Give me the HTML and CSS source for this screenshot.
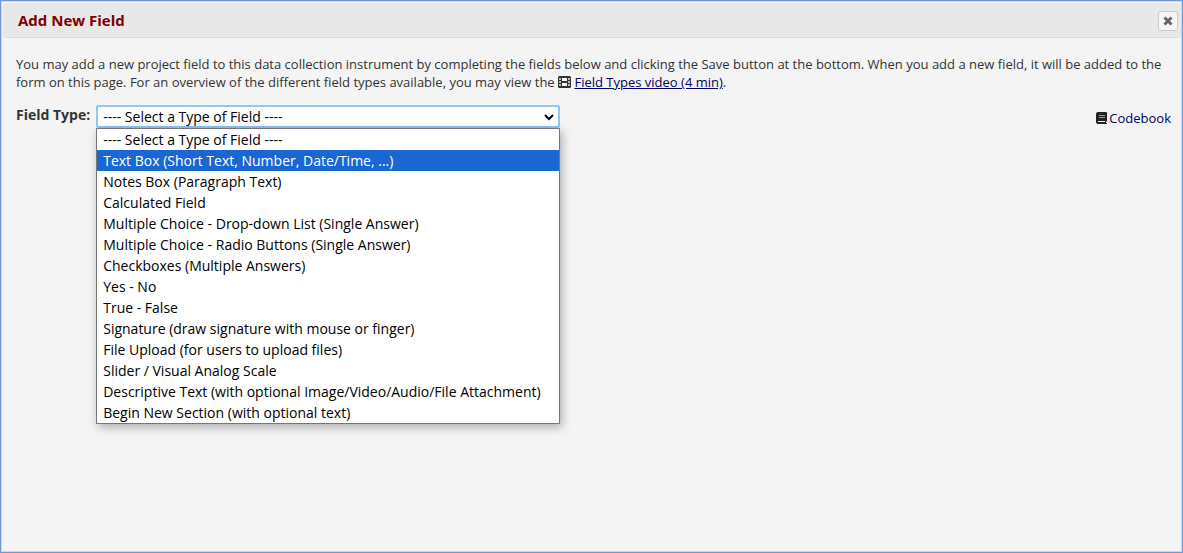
FILE: index.html
```html
<!DOCTYPE html>
<html lang="en">
<head>
<meta charset="utf-8">
<title>Add New Field</title>
<link rel="stylesheet" href="styles.css">
</head>
<body>
<section class="dialog" role="dialog" aria-labelledby="dialog-title">
  <header class="titlebar">
    <h1 class="title" id="dialog-title">Add New Field</h1>
    <button class="close" type="button" aria-label="Close">
      <svg width="10" height="10" viewBox="0 0 10 10" aria-hidden="true"><path d="M1.5 1.5l7 7M8.5 1.5l-7 7" stroke="#666" stroke-width="3"/></svg>
    </button>
  </header>
  <div class="content">
    <p class="intro">You may add a new project field to this data collection instrument by completing the fields below and clicking the Save button at the bottom. When you add a new field, it will be added to the form on this page. For an overview of the different field types available, you may view the <svg class="film" width="13" height="12" viewBox="0 0 13 12" aria-hidden="true"><rect width="13" height="12" rx="1.5" fill="#333"/><path d="M4 2h5v3H4zM4 7h5v3H4z" fill="#f4f4f4"/><path d="M1 2h2v2H1zM1 5h2v2H1zM1 8h2v2H1zM10 2h2v2h-2zM10 5h2v2h-2zM10 8h2v2h-2z" fill="#bbb"/></svg> <a class="video" href="#video">Field Types video (4 min)</a>.</p>
    <form class="row">
      <label class="label" for="field-type">Field Type:</label>
      <div class="picker">
        <select class="select" id="field-type">
          <option>---- Select a Type of Field ----</option>
        </select>
        <svg class="chevron" width="10" height="7" viewBox="0 0 10 7" aria-hidden="true"><path d="M1 1l4 4 4-4" fill="none" stroke="#000" stroke-width="2"/></svg>
        <ul class="menu" role="listbox" aria-label="Field types">
          <li class="option" role="option">---- Select a Type of Field ----</li>
          <li class="option active" role="option" aria-selected="true">Text Box (Short Text, Number, Date/Time, ...)</li>
          <li class="option" role="option">Notes Box (Paragraph Text)</li>
          <li class="option" role="option">Calculated Field</li>
          <li class="option" role="option">Multiple Choice - Drop-down List (Single Answer)</li>
          <li class="option" role="option">Multiple Choice - Radio Buttons (Single Answer)</li>
          <li class="option" role="option">Checkboxes (Multiple Answers)</li>
          <li class="option" role="option">Yes - No</li>
          <li class="option" role="option">True - False</li>
          <li class="option" role="option">Signature (draw signature with mouse or finger)</li>
          <li class="option" role="option">File Upload (for users to upload files)</li>
          <li class="option" role="option">Slider / Visual Analog Scale</li>
          <li class="option" role="option">Descriptive Text (with optional Image/Video/Audio/File Attachment)</li>
          <li class="option" role="option">Begin New Section (with optional text)</li>
        </ul>
      </div>
      <a class="codebook" href="#codebook"><svg width="11" height="12" viewBox="0 0 11 12" aria-hidden="true"><path d="M2 0h8a1 1 0 0 1 1 1v8l-1 1v1h1v1H2a2 2 0 0 1-2-2V2a2 2 0 0 1 2-2z" fill="#222"/><path d="M3 3.5h6M3 5.5h6" stroke="#999" stroke-width="1"/><path d="M2 9h7v1H2z" fill="#f4f4f4"/></svg>Codebook</a>
    </form>
  </div>
</section>
</body>
</html>
```
FILE: styles.css
```css
* { box-sizing: border-box; }
body {
  margin: 0;
  font-family: "Open Sans", sans-serif;
  font-size: 13px;
  color: #333;
}
.dialog {
  min-height: 100vh;
  padding: 2px 1px;
  background: #f4f4f4;
  border: 1px solid #6f97da;
  box-shadow: inset 0 0 0 1px #c8d6ef;
}
.titlebar {
  display: flex;
  align-items: center;
  justify-content: space-between;
  height: 35px;
  margin-left: 1px;
  padding: 0 3px 0 15px;
  background: #e8e8e8;
  border-bottom: 1px solid #ddd;
  border-radius: 4px;
}
.title {
  margin: 0;
  font-size: 15px;
  line-height: 20px;
  color: #800000;
}
.close {
  display: flex;
  align-items: center;
  justify-content: center;
  width: 20px;
  height: 20px;
  margin-top: 2px;
  padding: 0;
  background: #f6f6f6;
  border: 1px solid #ccc;
  border-radius: 3px;
}
.content { padding: 17px 10px 0 14px; }
.intro {
  margin: 0;
  line-height: 18px;
}
.film { vertical-align: -1px; }
.video { color: #000066; }
.row {
  display: flex;
  align-items: flex-start;
  margin: 14px 0 0;
}
.label {
  padding-top: 1px;
  font-size: 14px;
  line-height: 18px;
  font-weight: 700;
  margin-right: 6px;
}
.picker {
  position: relative;
  width: 464px;
}
.select {
  display: block;
  width: 100%;
  height: 23px;
  padding: 0 5px;
  appearance: none;
  font: inherit;
  font-size: 14px;
  color: #000;
  background: #fff;
  border: 2px solid #90c6fa;
  border-radius: 2px;
}
.chevron {
  position: absolute;
  top: 9px;
  right: 6px;
  pointer-events: none;
}
.menu {
  position: absolute;
  top: 100%;
  left: 0;
  width: 100%;
  margin: 0;
  padding: 0;
  list-style: none;
  background: #fff;
  border: 1px solid #767676;
  box-shadow: 2px 3px 9px rgba(0, 0, 0, 0.3);
}
.option {
  padding: 0 6px;
  font-size: 14px;
  line-height: 21px;
  color: #000;
}
.active {
  color: #fff;
  background: #1967d2;
}
.codebook {
  display: flex;
  align-items: center;
  gap: 2px;
  margin: 4px 0 0 auto;
  line-height: 18px;
  color: #000066;
  text-decoration: none;
}
```
